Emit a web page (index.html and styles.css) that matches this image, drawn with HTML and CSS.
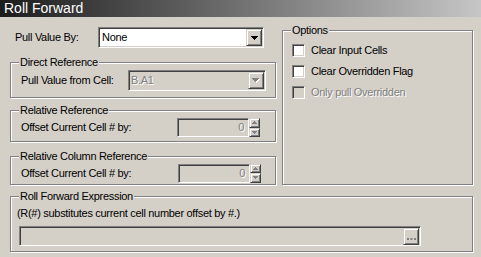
FILE: index.html
```html
<!DOCTYPE html>
<html lang="en">
<head>
    <meta charset="UTF-8">
    <title>Roll Forward</title>
    <link rel="stylesheet" href="styles.css">
</head>
<body>
    <div class="dialog">
        <div class="title-bar">Roll Forward</div>
        <div class="dialog-body">
            <div class="top-area">
                <div class="left-col">
                    <div class="pull-row">
                        <span class="pull-label">Pull Value By:</span>
                        <div class="combo pull-combo">
                            <span class="combo-text">None</span>
                            <span class="raised combo-btn">
                                <svg width="7" height="4" viewBox="0 0 7 4"><path d="M0 0h7v1H6v1H5v1H4v1H3V3H2V2H1V1H0z" fill="#000"/></svg>
                            </span>
                        </div>
                    </div>

                    <div class="group direct-group">
                        <span class="group-title">Direct Reference</span>
                        <span>Pull Value from Cell:</span>
                        <div class="combo disabled cell-combo">
                            <span class="combo-text">B.A1</span>
                            <span class="raised combo-btn">
                                <svg width="8" height="5" viewBox="0 0 8 5"><path d="M1 1h7v1H7v1H6v1H5v1H4V4H3V3H2V2H1z" fill="#fff"/><path d="M0 0h7v1H6v1H5v1H4v1H3V3H2V2H1V1H0z" fill="#808080"/></svg>
                            </span>
                        </div>
                    </div>

                    <div class="group offset-group rel-group">
                        <span class="group-title">Relative Reference</span>
                        <span>Offset Current Cell # by:</span>
                        <div class="spin-field">
                            <div class="field disabled num-field">0</div>
                            <div class="spin">
                                <span class="raised spin-half"><svg width="5" height="3" viewBox="0 0 5 3"><path d="M2 0h1v1h1v1h1v1H0V2h1V1h1z" fill="#808080"/></svg></span>
                                <span class="raised spin-half"><svg width="5" height="3" viewBox="0 0 5 3"><path d="M0 0h5v1H4v1H3v1H2V2H1V1H0z" fill="#808080"/></svg></span>
                            </div>
                        </div>
                    </div>

                    <div class="group offset-group col-group">
                        <span class="group-title">Relative Column Reference</span>
                        <span>Offset Current Cell # by:</span>
                        <div class="spin-field">
                            <div class="field disabled num-field">0</div>
                            <div class="spin">
                                <span class="raised spin-half"><svg width="5" height="3" viewBox="0 0 5 3"><path d="M2 0h1v1h1v1h1v1H0V2h1V1h1z" fill="#808080"/></svg></span>
                                <span class="raised spin-half"><svg width="5" height="3" viewBox="0 0 5 3"><path d="M0 0h5v1H4v1H3v1H2V2H1V1H0z" fill="#808080"/></svg></span>
                            </div>
                        </div>
                    </div>
                </div>

                <div class="group options-group">
                    <span class="group-title">Options</span>
                    <label class="check-row"><span class="checkbox"></span>Clear Input Cells</label>
                    <label class="check-row"><span class="checkbox"></span>Clear Overridden Flag</label>
                    <label class="check-row is-disabled"><span class="checkbox"></span>Only pull Overridden</label>
                </div>
            </div>

            <div class="group expr-group">
                <span class="group-title">Roll Forward Expression</span>
                <div class="expr-hint">(R(#) substitutes current cell number offset by #.)</div>
                <div class="field disabled expr-field">
                    <span class="raised dots-btn">
                        <svg width="9" height="2" viewBox="0 0 9 2"><rect x="0" y="0" width="2" height="2" fill="#808080"/><rect x="3.5" y="0" width="2" height="2" fill="#808080"/><rect x="7" y="0" width="2" height="2" fill="#808080"/></svg>
                    </span>
                </div>
            </div>
        </div>
    </div>
</body>
</html>
```

FILE: styles.css
```css
/* --- Base --- */
body {
    margin: 0;
    background: #d4d0c8;
    font: 11px/13px "Liberation Sans", Arial, sans-serif;
    letter-spacing: -0.3px;
    color: #000;
}

.dialog {
    width: 481px;
    height: 257px;
    overflow: hidden;
}

.title-bar {
    height: 17px;
    line-height: 17px;
    padding-left: 4px;
    color: #fff;
    font-size: 14px;
    letter-spacing: 0;
    background: linear-gradient(to right, #1c1c1c, #c6c6c6);
}

.dialog-body {
    padding: 10px 0 0 10px;
}

.top-area {
    display: grid;
    grid-template-columns: 266px 191px;
    column-gap: 6px;
}

.left-col {
    display: flex;
    flex-direction: column;
}

/* --- 3D borders --- */
.raised {
    box-sizing: border-box;
    display: flex;
    align-items: center;
    justify-content: center;
    background: #d4d0c8;
    border: 1px solid;
    border-color: #d4d0c8 #404040 #404040 #d4d0c8;
    box-shadow: inset 1px 1px #fff, inset -1px -1px #808080;
}

.combo,
.field,
.checkbox {
    box-sizing: border-box;
    background: #fff;
    border: 1px solid;
    border-color: #808080 #fff #fff #808080;
    box-shadow: inset 1px 1px #404040, inset -1px -1px #d4d0c8;
}

.disabled {
    background: #d4d0c8;
    color: #808080;
    text-shadow: 1px 1px #fff;
}

/* --- Group boxes --- */
.group {
    position: relative;
    box-sizing: border-box;
    border: 1px solid #808080;
    box-shadow: inset 1px 1px #fff, 1px 1px #fff;
}

.group-title {
    position: absolute;
    top: -7px;
    left: 8px;
    padding: 0 1px;
    background: #d4d0c8;
}

/* --- Pull value row --- */
.pull-row {
    display: flex;
    align-items: center;
    height: 21px;
    padding-left: 5px;
}

.pull-label {
    width: 83px;
}

.combo {
    display: flex;
    align-items: center;
    height: 21px;
    padding: 1px 1px 1px 3px;
}

.pull-combo {
    width: 166px;
}

.combo-text {
    flex: 1;
}

.combo-btn {
    width: 16px;
    height: 17px;
}

/* --- Direct reference --- */
.direct-group {
    display: flex;
    align-items: center;
    margin-top: 14px;
    height: 36px;
    padding: 0 9px 0 10px;
}

.cell-combo {
    width: 138px;
    margin-left: auto;
    padding-left: 2px;
}

/* --- Offset groups --- */
.offset-group {
    display: flex;
    align-items: center;
    padding: 0 15px 0 10px;
}

.rel-group {
    margin-top: 12px;
    height: 32px;
    padding-top: 3px;
}

.col-group {
    margin-top: 14px;
    height: 29px;
    padding-top: 5px;
    padding-right: 14px;
}

.spin-field {
    display: flex;
    margin-left: auto;
}

.num-field {
    width: 72px;
    height: 19px;
    padding-right: 4px;
    text-align: right;
    line-height: 17px;
}

.spin {
    display: flex;
    flex-direction: column;
    width: 11px;
    height: 19px;
}

.spin-half {
    flex: 1;
}

/* --- Options --- */
.options-group {
    margin-top: 3px;
    display: flex;
    flex-direction: column;
    gap: 8px;
    padding: 13px 0 0 9px;
}

.check-row {
    display: flex;
    align-items: center;
    gap: 6px;
    height: 13px;
}

.checkbox {
    width: 13px;
    height: 13px;
}

.is-disabled {
    color: #808080;
    text-shadow: 1px 1px #fff;
}

.is-disabled .checkbox {
    background: #d4d0c8;
}

/* --- Expression --- */
.expr-group {
    width: 463px;
    height: 56px;
    margin-top: 11px;
    padding: 10px 0 0 6px;
}

.expr-hint {
    height: 13px;
}

.expr-field {
    display: flex;
    justify-content: flex-end;
    width: 402px;
    height: 20px;
    margin: 6px 0 0 2px;
    padding: 1px;
}

.dots-btn {
    width: 16px;
    height: 17px;
    align-items: flex-end;
    padding-bottom: 4px;
}
```
